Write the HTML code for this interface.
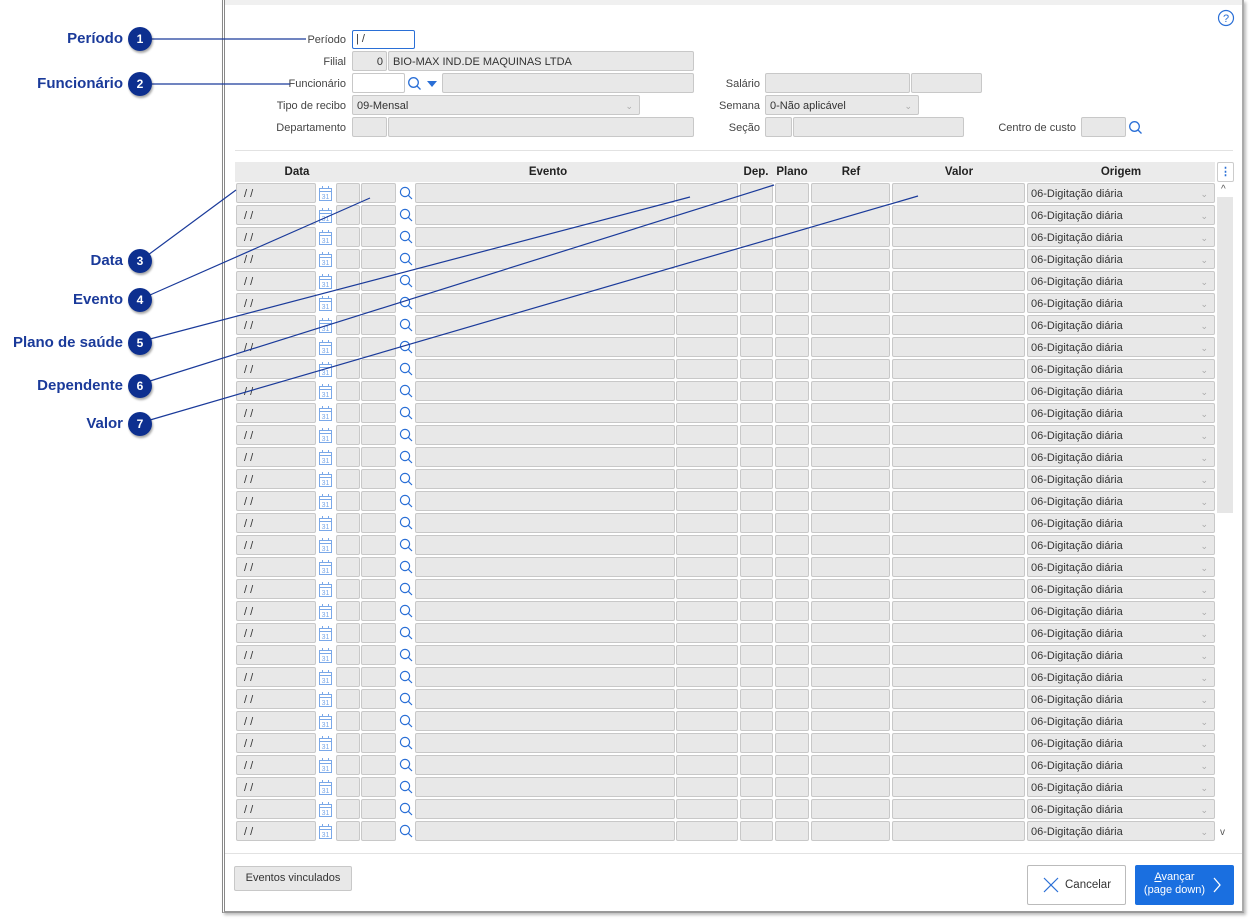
<!DOCTYPE html>
<html><head><meta charset="utf-8"><style>
*{box-sizing:border-box;margin:0;padding:0}
body{width:1251px;height:920px;background:#fff;position:relative;overflow:hidden;font-family:"Liberation Sans",sans-serif;font-size:11px;color:#333}
.a{position:absolute}
.f{position:absolute;background:#e8e8e8;border:1px solid #c8c8c8;border-radius:2px;height:20px;line-height:19px;padding-left:4px;padding-top:1px;font-size:11px;color:#333;white-space:nowrap;overflow:hidden}
.l{position:absolute;text-align:right;font-size:11px;color:#444}
.h{position:absolute;top:162px;height:20px;line-height:20px;font-weight:bold;font-size:11.5px;color:#222;text-align:center}
.cb{position:absolute;font-weight:bold;color:#1a3a9a;font-size:15px;text-align:right;width:120px}
</style></head><body>
<div class="a" style="left:222px;top:0;width:1022px;height:913px;border-left:3px double #888;border-right:2px solid #aaa;border-bottom:2px solid #999;box-shadow:2px 2px 3px #bbb"></div>
<div class="a" style="left:225px;top:0;width:1017px;height:5px;background:#f0f0f0"></div>
<svg class="a" style="left:1217px;top:9px" width="18" height="18" viewBox="0 0 18 18"><circle cx="9" cy="9" r="7.5" fill="none" stroke="#2a6fd6" stroke-width="1.2"/><text x="9" y="13" font-size="11" text-anchor="middle" fill="#2a6fd6" font-family="Liberation Sans">?</text></svg>

<div class="l" style="left:250px;top:34px;width:96px">Período</div>
<div class="a" style="left:352px;top:30px;width:63px;height:19px;border:1px solid #2a6fd6;border-radius:2px;padding-left:3px;line-height:17px">| /</div>
<div class="l" style="left:250px;top:56px;width:96px">Filial</div>
<div class="f" style="left:352px;top:51px;width:35px;text-align:right;padding-right:3px">0</div>
<div class="f" style="left:388px;top:51px;width:306px">BIO-MAX IND.DE MAQUINAS LTDA</div>
<div class="l" style="left:250px;top:78px;width:96px">Funcionário</div>
<div class="a" style="left:352px;top:73px;width:53px;height:20px;border:1px solid #c8c8c8;border-radius:2px;background:#fff"></div>
<svg class="a" style="left:407px;top:76px" width="16" height="16"><circle cx="6.5" cy="6.5" r="4.8" fill="none" stroke="#2a6fd6" stroke-width="1.3"/><line x1="10" y1="10" x2="13.5" y2="13.5" stroke="#2a6fd6" stroke-width="1.3"/></svg>
<svg class="a" style="left:427px;top:80px" width="11" height="8"><path d="M0 1h10L5 7z" fill="#2a6fd6"/></svg>
<div class="f" style="left:442px;top:73px;width:252px"></div>
<div class="l" style="left:250px;top:100px;width:96px">Tipo de recibo</div>
<div class="f" style="left:352px;top:95px;width:288px">09-Mensal<span style="position:absolute;right:6px;color:#aaa;font-size:9px">&#8964;</span></div>
<div class="l" style="left:250px;top:122px;width:96px">Departamento</div>
<div class="f" style="left:352px;top:117px;width:35px"></div>
<div class="f" style="left:388px;top:117px;width:306px"></div>

<div class="l" style="left:680px;top:78px;width:80px">Salário</div>
<div class="f" style="left:765px;top:73px;width:145px"></div>
<div class="f" style="left:911px;top:73px;width:71px"></div>
<div class="l" style="left:680px;top:100px;width:80px">Semana</div>
<div class="f" style="left:765px;top:95px;width:154px">0-Não aplicável<span style="position:absolute;right:6px;color:#aaa;font-size:9px">&#8964;</span></div>
<div class="l" style="left:680px;top:122px;width:80px">Seção</div>
<div class="f" style="left:765px;top:117px;width:27px"></div>
<div class="f" style="left:793px;top:117px;width:171px"></div>
<div class="l" style="left:960px;top:122px;width:116px">Centro de custo</div>
<div class="f" style="left:1081px;top:117px;width:45px"></div>
<svg class="a" style="left:1128px;top:120px" width="16" height="16"><circle cx="6.5" cy="6.5" r="4.8" fill="none" stroke="#2a6fd6" stroke-width="1.3"/><line x1="10" y1="10" x2="13.5" y2="13.5" stroke="#2a6fd6" stroke-width="1.3"/></svg>
<div class="a" style="left:235px;top:150px;width:998px;height:1px;background:#e2e2e2"></div>

<div class="a" style="left:235px;top:162px;width:980px;height:20px;background:#ebebeb"></div>
<div class="h" style="left:236px;width:122px">Data</div>
<div class="h" style="left:415px;width:266px">Evento</div>
<div class="h" style="left:738px;width:36px">Dep.</div>
<div class="h" style="left:774px;width:36px">Plano</div>
<div class="h" style="left:811px;width:80px">Ref</div>
<div class="h" style="left:892px;width:134px">Valor</div>
<div class="h" style="left:1027px;width:188px">Origem</div>
<div class="a" style="left:1217px;top:162px;width:17px;height:20px;border:1px solid #ccc;border-radius:2px;color:#2a6fd6;text-align:center;font-weight:bold;line-height:18px">⋮</div>
<div class="a" style="left:1221px;top:184px;color:#555;font-size:10px">^</div>
<div class="a" style="left:1217px;top:197px;width:16px;height:316px;background:#e6e6e6"></div>
<div class="a" style="left:1220px;top:827px;color:#555;font-size:10px">v</div>
<div id="rows"></div>

<div class="a" style="left:225px;top:853px;width:1017px;height:1px;background:#e2e2e2"></div>
<div class="a" style="left:234px;top:866px;width:118px;height:25px;background:#e8e8e8;border:1px solid #c8c8c8;border-radius:2px;text-align:center;line-height:23px;font-size:11px">Eventos vinculados</div>
<div class="a" style="left:1027px;top:865px;width:99px;height:40px;border:1px solid #bbb;border-radius:2px;background:#fff"></div>
<svg class="a" style="left:1043px;top:877px" width="16" height="16"><path d="M1 1L15 15M15 1L1 15" stroke="#2a6fd6" stroke-width="1.2"/></svg>
<div class="a" style="left:1065px;top:879px;font-size:11.5px">Cancelar</div>
<div class="a" style="left:1135px;top:865px;width:99px;height:40px;background:#1a6fe0;border-radius:2px;color:#fff;font-size:11px;line-height:13px;text-align:center;padding:6px 20px 0 0"><u>A</u>vançar<br>(page down)</div>
<svg class="a" style="left:1212px;top:877px" width="10" height="16"><path d="M2 1L8 8L2 15" fill="none" stroke="#fff" stroke-width="1.3"/></svg>

<svg class="a" style="left:0;top:0" width="1251" height="920">
<g stroke="#1a3a9a" stroke-width="1.2" fill="none">
<line x1="152" y1="39" x2="306" y2="39"/><line x1="152" y1="84" x2="290" y2="84"/>
<line x1="148" y1="255" x2="236" y2="190"/><line x1="150" y1="295" x2="370" y2="198"/>
<line x1="150" y1="339" x2="690" y2="197"/><line x1="150" y1="381" x2="774" y2="185"/>
<line x1="150" y1="420" x2="918" y2="196"/></g>
<g fill="#0d2f8f" filter="drop-shadow(1px 2px 1px rgba(0,0,0,.35))">
<circle cx="140" cy="39" r="12"/><circle cx="140" cy="84" r="12"/><circle cx="140" cy="261" r="12"/><circle cx="140" cy="300" r="12"/><circle cx="140" cy="343" r="12"/><circle cx="140" cy="386" r="12"/><circle cx="140" cy="424" r="12"/></g>
<g fill="#fff" font-family="Liberation Sans" font-weight="bold" font-size="12" text-anchor="middle">
<text x="140" y="43">1</text><text x="140" y="88">2</text><text x="140" y="265">3</text><text x="140" y="304">4</text><text x="140" y="347">5</text><text x="140" y="390">6</text><text x="140" y="428">7</text></g>
</svg>
<div class="cb" style="left:3px;top:30px">Período</div>
<div class="cb" style="left:3px;top:75px">Funcionário</div>
<div class="cb" style="left:3px;top:252px">Data</div>
<div class="cb" style="left:3px;top:291px">Evento</div>
<div class="cb" style="left:3px;top:334px">Plano de saúde</div>
<div class="cb" style="left:3px;top:377px">Dependente</div>
<div class="cb" style="left:3px;top:415px">Valor</div>
<script>
var h='';var cols=[[236,80],[336,24],[361,35],[415,260],[676,62],[740,33],[775,34],[811,79],[892,133]];
for(var i=0;i<30;i++){var y=183+i*22;
cols.forEach(function(c,j){h+='<div class="f" style="left:'+c[0]+'px;top:'+y+'px;width:'+c[1]+'px">'+(j==0?'&nbsp;/ /':'')+'</div>';});
h+='<svg class="a" style="left:318px;top:'+(y+2)+'px" width="15" height="17"><rect x="1.5" y="3.5" width="12" height="12" fill="none" stroke="#7aa8e8"/><line x1="1.5" y1="6.5" x2="13.5" y2="6.5" stroke="#7aa8e8"/><line x1="4.5" y1="1" x2="4.5" y2="4" stroke="#7aa8e8"/><line x1="10.5" y1="1" x2="10.5" y2="4" stroke="#7aa8e8"/><text x="7.5" y="14" font-size="7" text-anchor="middle" fill="#7aa8e8" font-family="Liberation Sans">31</text></svg>';
h+='<svg class="a" style="left:399px;top:'+(y+3)+'px" width="16" height="16"><circle cx="6" cy="6" r="4.6" fill="none" stroke="#2a6fd6" stroke-width="1.2"/><line x1="9.3" y1="9.3" x2="13" y2="13" stroke="#2a6fd6" stroke-width="1.2"/></svg>';
h+='<div class="f" style="left:1027px;top:'+y+'px;width:188px;padding-left:3px">06-Digitação diária<span style="position:absolute;right:6px;color:#aaa;font-size:9px">&#8964;</span></div>';}
document.getElementById('rows').innerHTML=h;
</script>
</body></html>
